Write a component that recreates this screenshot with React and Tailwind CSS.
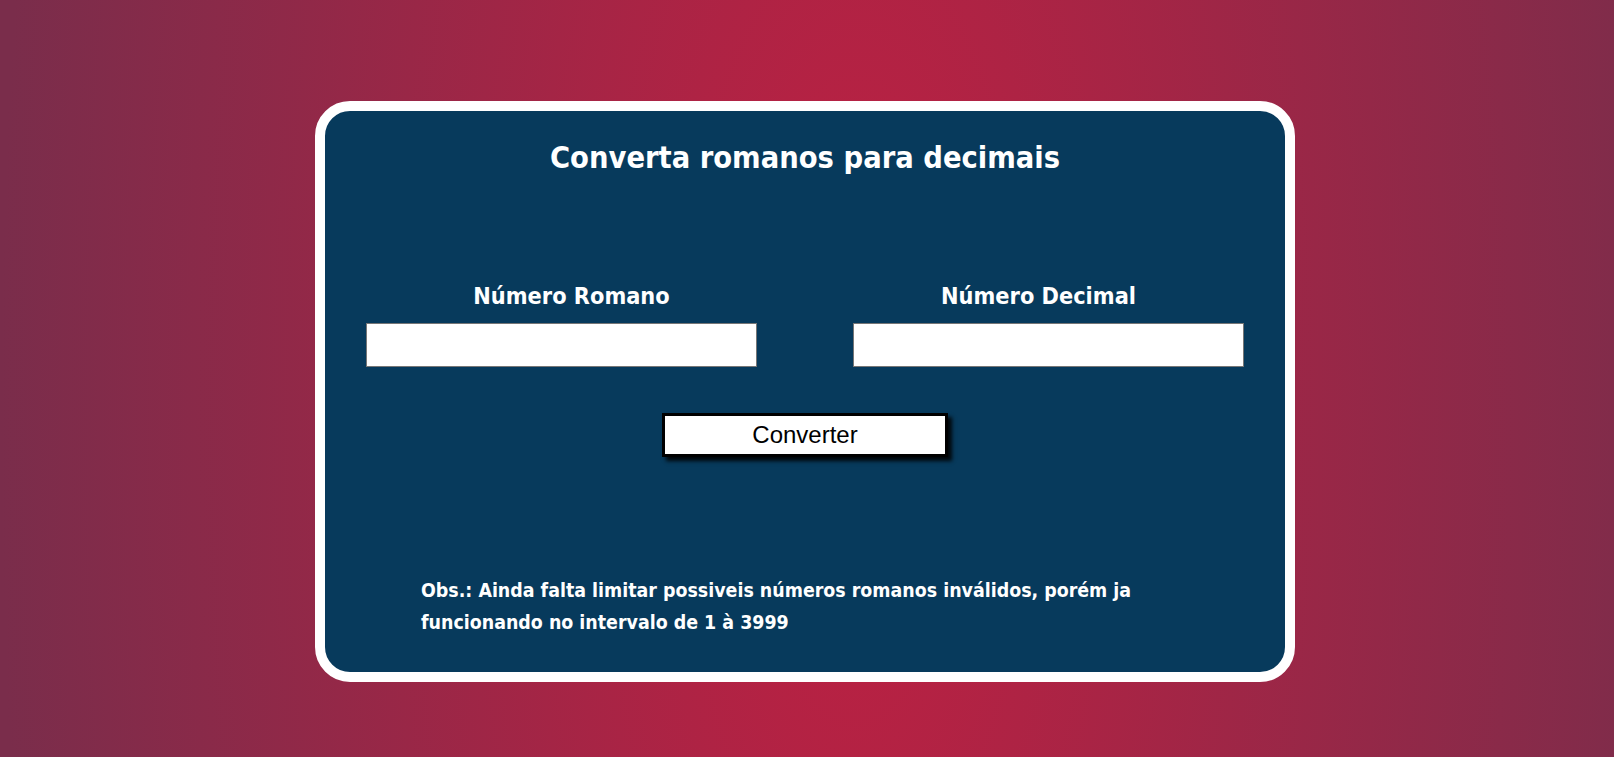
export default function App() {
  return (
    <div className="min-h-screen w-full flex justify-center pt-[101px] pr-[4px] bg-[radial-gradient(ellipse_53%_300%_at_53%_55%,#be2042_0%,#7a2d4b_100%)] font-['DejaVu_Sans',sans-serif] font-stretch-condensed">
      <div className="w-[980px] h-[581px] border-[10px] border-white rounded-[35px] bg-[#073a5c] flex flex-col items-center text-white">
        <h1 className="mt-[27px] text-[30.5px] leading-[40px] font-bold">Converta romanos para decimais</h1>

        <div className="mt-[102px] flex gap-[96px]">
          <div className="flex flex-col items-center w-[391px]">
            <label className="pl-[20px] text-[23.3px] leading-[31px] font-bold">Número Romano</label>
            <input type="text" className="mt-[12px] w-[391px] h-[44px] bg-white border border-[#767676] text-black px-2 outline-none" />
          </div>
          <div className="flex flex-col items-center w-[391px]">
            <label className="pr-[20px] text-[23.3px] leading-[31px] font-bold">Número Decimal</label>
            <input type="text" className="mt-[12px] w-[391px] h-[44px] bg-white border border-[#767676] text-black px-2 outline-none" />
          </div>
        </div>

        <button className="mt-[46px] w-[286px] h-[44px] bg-white border-[3px] border-black text-black text-[24px] leading-none font-['Liberation_Sans',Arial,sans-serif] font-stretch-normal shadow-[4px_4px_4px_rgba(0,0,0,0.9)] cursor-pointer">
          Converter
        </button>

        <div className="mt-[118px] w-full pl-[96px]">
          <p className="w-[720px] text-[19.4px] leading-[32px] font-bold">
            Obs.: Ainda falta limitar possiveis números romanos inválidos, porém ja funcionando no intervalo de 1 à 3999
          </p>
        </div>
      </div>
    </div>
  );
}
